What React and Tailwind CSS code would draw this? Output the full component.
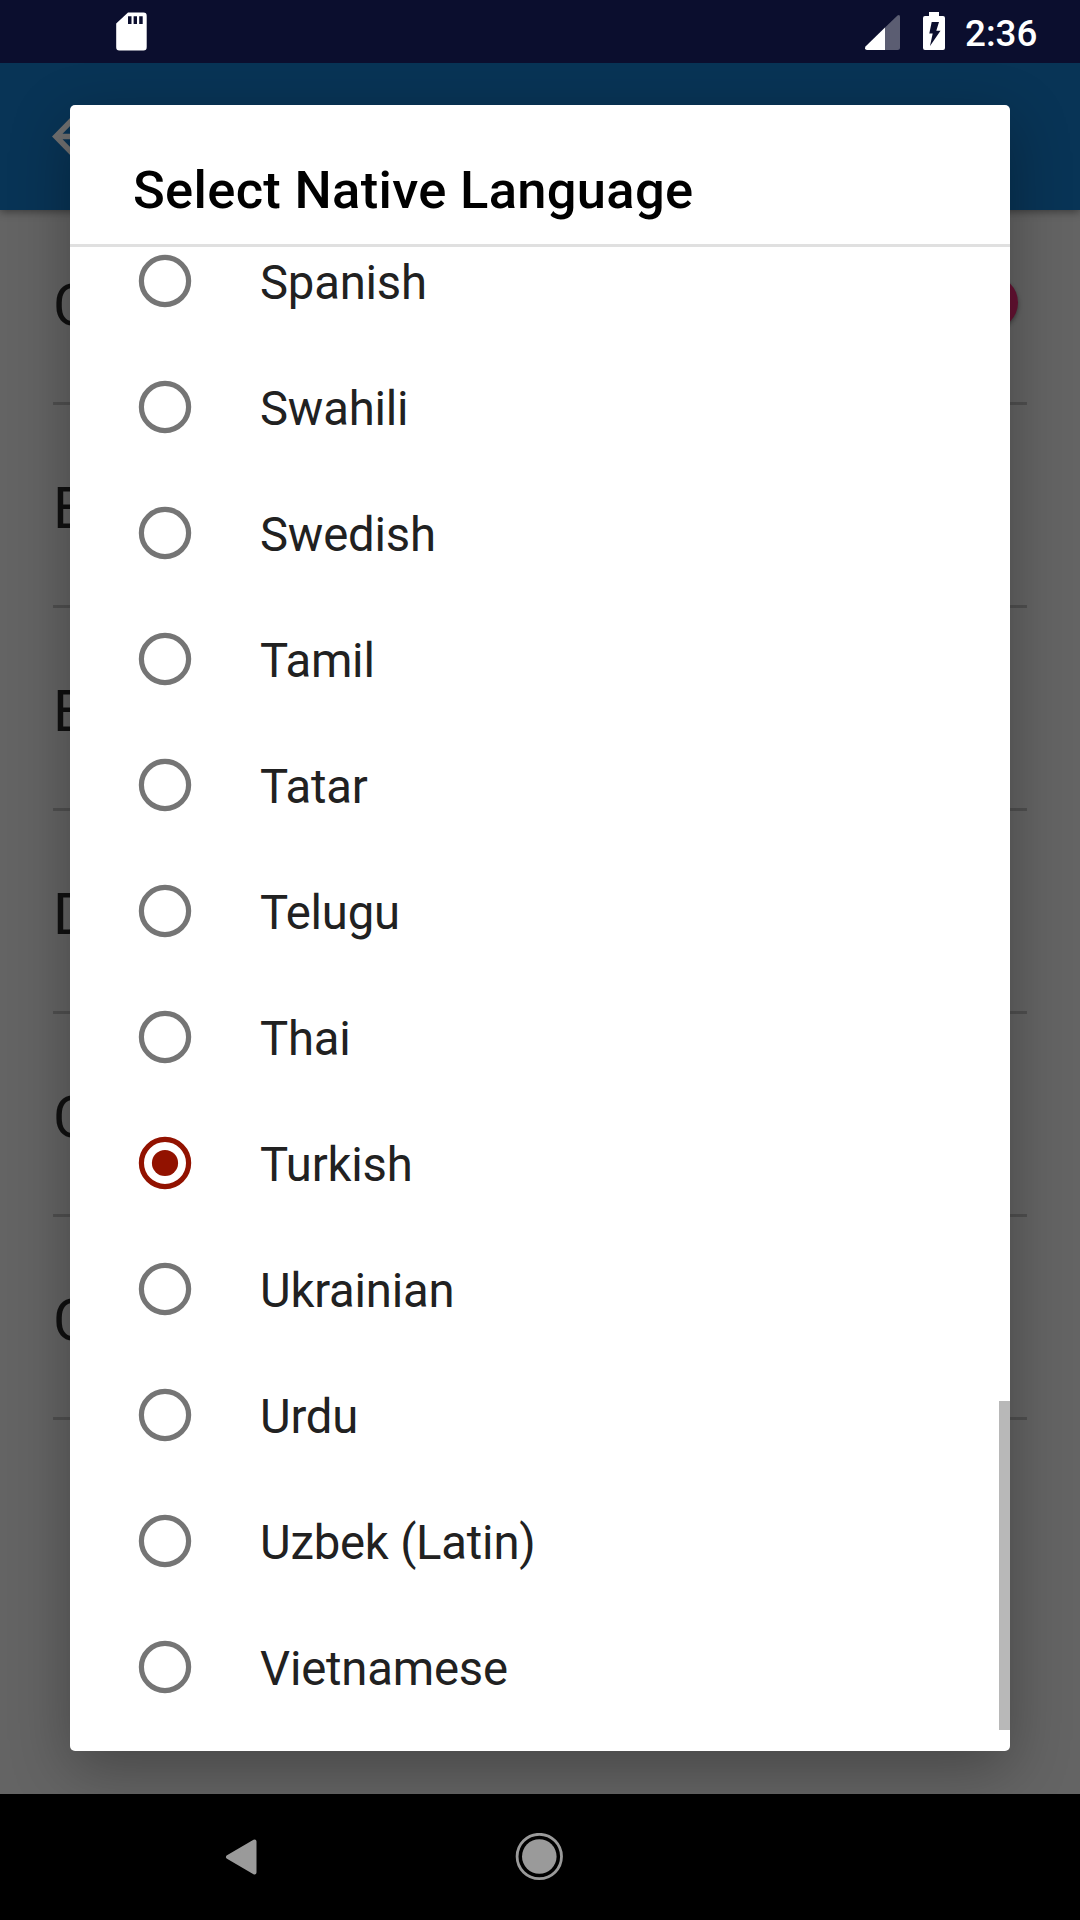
const languages = [
  "Spanish", "Swahili", "Swedish", "Tamil", "Tatar", "Telugu",
  "Thai", "Turkish", "Ukrainian", "Urdu", "Uzbek (Latin)", "Vietnamese",
];
const settings = ["C", "E", "E", "D", "C", "C"];

function StatusBar() {
  return (
    <header className="relative z-20 flex h-[63px] shrink-0 bg-[#0b0e2e] text-white">
      <svg className="ml-[116px] mt-[12px] h-[39px] w-[31px]" viewBox="0 0 31 39" fill="currentColor">
        <path fillRule="evenodd" d="M12 .6H27.5Q30.7.6 30.7 3.8V35.2Q30.7 38.4 27.5 38.4H3.3Q.2 38.4.2 35.2V11.5ZM12 4.3V12H15.5V4.3ZM17.6 4.3V12H21V4.3ZM23.2 4.3V12H26.7V4.3Z" />
      </svg>
      <svg className="ml-auto mt-[14px] h-[37px] w-[36px]" viewBox="0 0 36 37" fill="currentColor">
        <path opacity=".33" d="M20 13.5 32.5 1.5Q35 0 35 3V33.5Q35 36 32.500 36H20Z" />
        <path d="M20 13.5V36H2Q-1 35.500.5 32.500Z" />
      </svg>
      <svg className="ml-[22px] mt-[12px] h-[38px] w-[22px]" viewBox="0 0 22 38" fill="currentColor">
        <path fillRule="evenodd" d="M6 0H16V4H20Q22 4 22 6V36Q22 38 20 38H2Q0 38 0 36V6Q0 4 2 4H6ZM8.700 10 6.300 21.500H9.700L7 34 17.500 18.700H13.300L16 10Z" />
      </svg>
      <span className="ml-[20px] mr-[42px] mt-[12px] w-[73px] whitespace-nowrap text-[36.75px] font-medium leading-[44px]">2:36</span>
    </header>
  );
}

function SettingsScreen() {
  return (
    <div className="flex min-h-0 flex-1 flex-col bg-[#646464]">
      <div className="z-[1] flex h-[147px] shrink-0 items-center bg-[#083456] pl-[52px] shadow-[0_2px_8px_rgba(0,0,0,0.4)]">
        <svg className="h-[42px] w-[42px]" viewBox="0 0 42 42" fill="none" stroke="#707070" strokeWidth="5.600">
          <path d="M22.500 1.500 3.900 20.500 22.500 39.500M4 20.500H42" />
        </svg>
      </div>
      <div className="-mt-[8px] flex flex-col px-[53px]">
        {settings.map((label, i) => (
          <div key={i} className="flex h-[203px] items-center justify-between border-b-[3px] border-[#505050] pt-[5px] text-[57.75px] leading-[68px] text-[#101010]">
            <span>{label}</span>
            {i === 0 && <span className="mr-[9px] mt-[-5px] size-[53px] rounded-full bg-[#661233] shadow-[0_2px_4px_rgba(0,0,0,0.4)]" />}
          </div>
        ))}
      </div>
    </div>
  );
}

function Radio({ checked }) {
  return (
    <svg className={checked ? "size-[54px] text-[#921200]" : "size-[54px] text-[#757575]"} viewBox="-27 -27 54 54">
      <circle r="23.600" fill="none" stroke="currentColor" strokeWidth="5.200" />
      {checked && <circle r="13.100" fill="currentColor" />}
    </svg>
  );
}

function LanguageDialog() {
  return (
    <section className="absolute left-[70px] top-[105px] z-10 flex h-[1646px] w-[940px] flex-col rounded-[5px] bg-white shadow-[0_18px_60px_rgba(0,0,0,0.3)]">
      <h1 className="h-[142px] shrink-0 border-b-[3px] border-[#e0e0e0] pl-[63px] pt-[54px] text-[52.5px] font-medium leading-[62px] tracking-[0.31px] text-black">Select Native Language</h1>
      <div className="relative min-h-0 flex-1 overflow-hidden">
        <ul className="-mt-[29px]">
          {languages.map((name) => (
            <li key={name} className="flex h-[126px] items-center pl-[68px]">
              <Radio checked={name === "Turkish"} />
              <span className="ml-[68px] pt-[4px] text-[47.25px] leading-[56px] tracking-[-0.2px] text-[#212121]">{name}</span>
            </li>
          ))}
        </ul>
        <div className="absolute bottom-[21px] right-0 h-[329px] w-[11px] bg-[#b8b8b8]" />
      </div>
    </section>
  );
}

function NavigationBar() {
  return (
    <nav className="relative z-20 flex h-[126px] shrink-0 items-center bg-black pl-[225px] text-[#9a9a9a]">
      <svg className="h-[38px] w-[33px]" viewBox="0 0 33 38" fill="currentColor" stroke="currentColor" strokeWidth="4" strokeLinejoin="round">
        <path d="M3 19 29.500 3.500V34.500Z" />
      </svg>
      <svg className="ml-[257px] size-[48px]" viewBox="0 0 48 48">
        <circle cx="24.300" cy="23.500" r="22.200" fill="none" stroke="currentColor" strokeWidth="2.800" />
        <circle cx="24.300" cy="23.500" r="17.300" fill="currentColor" />
      </svg>
    </nav>
  );
}

export default function App() {
  return (
    <main className="relative flex h-[1920px] w-[1080px] flex-col overflow-hidden font-['Roboto',sans-serif]">
      <StatusBar />
      <SettingsScreen />
      <LanguageDialog />
      <NavigationBar />
    </main>
  );
}
